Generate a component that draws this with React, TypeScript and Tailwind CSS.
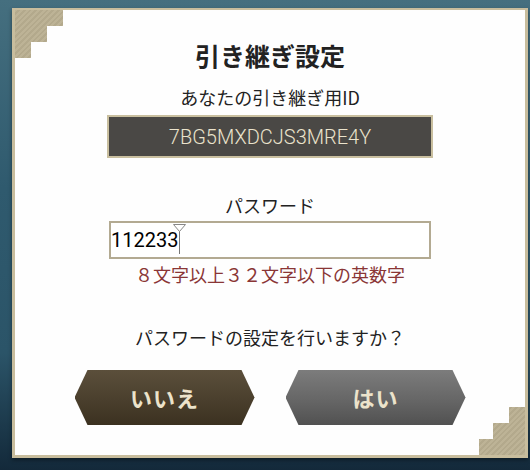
import React from "react";

const jp = "font-['Noto_Sans_CJK_JP','Noto_Sans',sans-serif]";

function ChevronButton({ label, tone }: { label: string; tone: "brown" | "gray" }) {
  const fill =
    tone === "brown"
      ? "bg-[linear-gradient(180deg,#5b4f3b_0%,#4a3f2d_55%,#3b3120_100%)]"
      : "bg-[linear-gradient(180deg,#7c7c7c_0%,#666666_55%,#515151_100%)]";
  return (
    <button
      className={`flex h-[55px] w-[180px] items-center justify-center ${fill} [clip-path:polygon(13px_0,calc(100%-13px)_0,100%_50%,calc(100%-13px)_100%,13px_100%,0_50%)]`}
    >
      <span className={`${jp} text-[22px] font-bold tracking-[1px] text-[#ece3cb]`}>{label}</span>
    </button>
  );
}

export default function App() {
  return (
    <div className="h-[470px] w-[530px] overflow-hidden bg-[linear-gradient(180deg,#456f7f_0%,#2f5a6e_40%,#2b5468_75%,#13293a_100%)] pl-[12px] pt-[8px]">
      <div className="relative h-[450px] w-[516px] border-[3px] border-t-2 border-[#c8bd9d] bg-[#fefefe] shadow-[0_2px_4px_rgba(0,0,0,0.4)]">
        {/* stepped corner ornaments */}
        <div className="absolute left-0 top-0 h-[48px] w-[48px] bg-[repeating-linear-gradient(135deg,#bdb396_0px,#bdb396_2px,#b3a98c_2px,#b3a98c_4px)] [clip-path:polygon(0_0,48px_0,48px_16px,32px_16px,32px_32px,16px_32px,16px_48px,0_48px)]" />
        <div className="absolute bottom-0 right-0 h-[48px] w-[46px] bg-[repeating-linear-gradient(135deg,#bdb396_0px,#bdb396_2px,#b3a98c_2px,#b3a98c_4px)] [clip-path:polygon(30px_0,100%_0,100%_100%,0_100%,0_32px,14px_32px,14px_16px,30px_16px)]" />

        <div className="flex flex-col items-center pt-[29px]">
          <h1 className={`${jp} text-[25px] font-bold leading-[32px] text-[#222]`}>引き継ぎ設定</h1>

          <p className={`${jp} mt-[14px] text-[18px] leading-[24px] text-[#222]`}>あなたの引き継ぎ用ID</p>
          <div className="mt-[6px] flex h-[43px] w-[326px] items-center justify-center border-2 border-[#c9bf9f] bg-[#4a4845]">
            <span className="font-['Roboto','Liberation_Sans',sans-serif] text-[20px] font-light text-[#ebe3cc]">7BG5MXDCJS3MRE4Y</span>
          </div>

          <p className={`${jp} mt-[35px] text-[18px] leading-[24px] text-[#222]`}>パスワード</p>
          <div className="mt-[4px] flex h-[38px] w-[322px] items-center border-2 border-[#b3aa92] bg-white">
            <span className="font-['Roboto','Liberation_Sans',sans-serif] text-[20px] leading-[24px] text-black">112233</span>
            <span className="relative ml-px mt-[4px] h-[24px] w-px bg-[#777]">
              <svg className="absolute -left-[6px] -top-[6px]" width="13" height="8" viewBox="0 0 13 8">
                <path d="M0.5 0.5 H12.5 L6.5 7.5 Z" fill="#fff" stroke="#888" strokeWidth="1" />
              </svg>
            </span>
          </div>
          <p className={`${jp} mt-[3px] text-[18px] leading-[24px] text-[#8a3636]`}>８文字以上３２文字以下の英数字</p>

          <p className={`${jp} mt-[39px] text-[18px] leading-[24px] text-[#222]`}>パスワードの設定を行いますか？</p>

          <div className="mt-[21px] flex gap-[31px]">
            <ChevronButton label="いいえ" tone="brown" />
            <ChevronButton label="はい" tone="gray" />
          </div>
        </div>
      </div>
    </div>
  );
}
